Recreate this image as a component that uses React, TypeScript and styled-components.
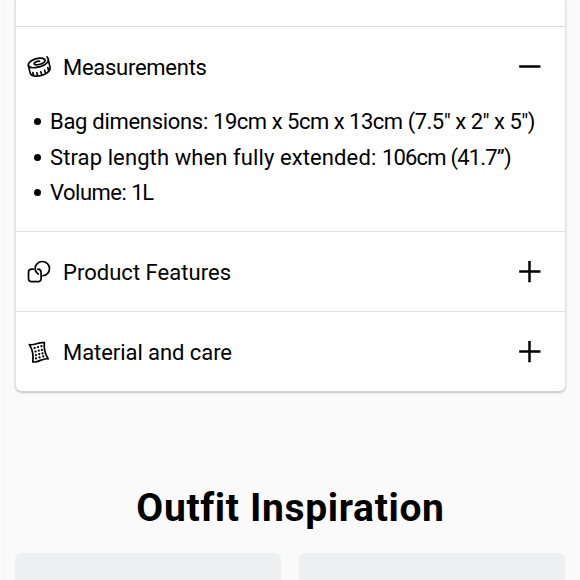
import React, { useState } from 'react';
import styled, { createGlobalStyle } from 'styled-components';

type SectionId = 'measurements' | 'features' | 'care';

export default function App() {
  const [opened, setOpened] = useState<SectionId | null>('measurements');

  const toggle = (id: SectionId) => setOpened(opened === id ? null : id);

  return (
    <StyledPage>
      <GlobalStyle />
      <StyledCard>
        <PreviousSection />
        <Section>
          <SectionHeader onClick={() => toggle('measurements')}>
            <TapeIcon />
            <SectionTitle $tracking={-0.27}>Measurements</SectionTitle>
            <ToggleIcon opened={opened === 'measurements'} />
          </SectionHeader>
          {opened === 'measurements' && (
            <DetailList>
              <DetailItem>
                <DetailText $tracking={-0.3}>Bag dimensions: </DetailText>
                <DetailText $tracking={-0.49}>19cm x 5cm x 13cm (7.5&quot; x 2&quot; x 5&quot;)</DetailText>
              </DetailItem>
              <DetailItem>
                <DetailText $tracking={0.1}>Strap length when fully extended: </DetailText>
                <DetailText $tracking={-0.8}>106cm (41.7”)</DetailText>
              </DetailItem>
              <DetailItem>
                <DetailText $tracking={-0.5}>Volume: </DetailText>
                <DetailText $tracking={-1.3}>1L</DetailText>
              </DetailItem>
            </DetailList>
          )}
        </Section>
        <Section>
          <SectionHeader onClick={() => toggle('features')}>
            <ShapesIcon />
            <SectionTitle $tracking={0.03}>Product Features</SectionTitle>
            <ToggleIcon opened={opened === 'features'} />
          </SectionHeader>
        </Section>
        <Section>
          <SectionHeader onClick={() => toggle('care')}>
            <FabricIcon />
            <SectionTitle $tracking={-0.06}>Material and care</SectionTitle>
            <ToggleIcon opened={opened === 'care'} />
          </SectionHeader>
        </Section>
      </StyledCard>
      <StyledHeading>Outfit Inspiration</StyledHeading>
      <Outfits>
        <OutfitCard />
        <OutfitCard />
      </Outfits>
    </StyledPage>
  );
}

function ToggleIcon({ opened }: { opened: boolean }) {
  return (
    <svg width="22" height="22" viewBox="0 0 22 22" stroke="#000" strokeWidth="2.5">
      <path d="M0.2 10.5H21.5" />
      {!opened && <path d="M10.5 0V21.3" />}
    </svg>
  );
}

function TapeIcon() {
  return (
    <StyledIcon viewBox="0 0 26 26">
      <path d="M21 2.9C23.6 5.8 22.6 8.6 18.8 10.7C13.5 13.6 4.4 15.2 2.6 11.9C1.2 8.3 8 4.5 13.6 4.2C18.3 3.9 20.2 6 18.3 8.1C16.2 10.3 9.7 11.6 8.3 10.2C7.2 8.9 10.3 7.1 13.5 7.1" />
      <path d="M2.4 11.6L4.2 19.1C5.3 23.1 13.3 22.9 18.7 20.2C22.5 18.3 24.7 16 24.1 13.4L22.4 6.4" />
      <path d="M6.9 18.5L7.5 21.2M10.9 18.9L11.6 21.8M14.9 17.9L15.7 20.9M18.6 16.1L19.4 19.1M21.8 13.5L22.5 16.2" />
    </StyledIcon>
  );
}

function ShapesIcon() {
  return (
    <StyledIcon viewBox="0 0 26 26">
      <path d="M12.3 15.1C10.3 13.9 9.1 12.2 9.1 9.6C9.1 5.6 12.3 2.5 16.3 2.5C20.3 2.5 23.5 5.6 23.5 9.6C23.5 13.6 20.3 16.7 17 16.7" />
      <path d="M7.2 10.2H6C3.9 10.2 2.5 11.5 2.5 13.5V19.2C2.5 21.4 3.9 22.7 6 22.7H11.7C13.8 22.7 15.1 21.4 15.1 19.2V13.5C15.1 11.5 13.8 10.3 11.9 10.2" />
    </StyledIcon>
  );
}

function FabricIcon() {
  return (
    <StyledIcon viewBox="0 0 26 26">
      <path d="M3.3 5.5C8.3 6.9 12.5 2.7 18.4 3.7C17.6 10.7 19.4 15.6 22.2 19.9C16 18.7 13 24 6.8 22.9C7.6 16.5 6.6 10.4 3.3 5.5Z" />
      <path
        strokeWidth="2.2"
        d="M8.6 9.1h.1M12 8.1h.1M15.4 7.2h.1M9.5 12.5h.1M12.7 11.6h.1M15.9 10.9h.1M9.9 16h.1M13.2 15.1h.1M16.5 14.4h.1M10 19.4h.1M13.5 18.4h.1M17.2 17.4h.1"
      />
    </StyledIcon>
  );
}

const GlobalStyle = createGlobalStyle`
  body {
    margin: 0;
    background: #fafafa;
    color: #000000;
    font-family: Roboto, sans-serif;
  }
`;

const StyledPage = styled.main`
  box-sizing: border-box;
  height: 580px;
  padding: 0 14px 0 14px;
  border-left: 1px solid #fefefe;
  overflow: hidden;
`;

const StyledCard = styled.div`
  box-sizing: border-box;
  height: 392px;
  border: 1px solid #e1e1e1;
  border-top: 0;
  border-bottom-color: #d4d4d4;
  border-radius: 0 0 7px 7px;
  background: #ffffff;
  box-shadow: 0 1px 2px rgba(0, 0, 0, 0.22);
`;

const PreviousSection = styled.div`
  height: 26px;
`;

const Section = styled.section`
  border-top: 1px solid #dfdfdf;
`;

const SectionHeader = styled.button`
  display: flex;
  align-items: center;
  width: 100%;
  height: 79px;
  padding: 0 24px 0 10px;
  border: 0;
  background: none;
  color: inherit;
  font: inherit;
  text-align: left;
  cursor: pointer;
`;

const StyledIcon = styled.svg`
  width: 26px;
  height: 26px;
  margin-right: 11px;
  fill: none;
  stroke: #000000;
  stroke-width: 1.7;
  stroke-linecap: round;
  stroke-linejoin: round;
`;

const SectionTitle = styled.span<{ $tracking: number }>`
  flex: 1;
  padding-top: 2px;
  font-size: 22px;
  line-height: 30px;
  letter-spacing: ${({ $tracking }) => $tracking}px;
`;

const DetailList = styled.ul`
  height: 125px;
  margin: 0;
  padding: 0 0 0 18px;
  box-sizing: border-box;
  list-style: none;
`;

const DetailItem = styled.li`
  display: flex;
  align-items: center;
  height: 35.7px;
  font-size: 22px;
  line-height: 30px;
  white-space: pre;

  &::before {
    content: '';
    width: 7px;
    height: 7px;
    margin: -5px 9px 0 0;
    border-radius: 50%;
    background: #000000;
  }
`;

const DetailText = styled.span<{ $tracking: number }>`
  padding-bottom: 4px;
  letter-spacing: ${({ $tracking }) => $tracking}px;
`;

const StyledHeading = styled.h2`
  margin: 91px 0 0;
  font-weight: 700;
  font-size: 39px;
  line-height: 50px;
  letter-spacing: 0.65px;
  text-align: center;
`;

const Outfits = styled.div`
  display: grid;
  grid-template-columns: repeat(2, 1fr);
  column-gap: 18px;
  padding: 20px 1px 0 0;
`;

const OutfitCard = styled.div`
  height: 300px;
  border-radius: 6px;
  background: #eeeff1;
`;
